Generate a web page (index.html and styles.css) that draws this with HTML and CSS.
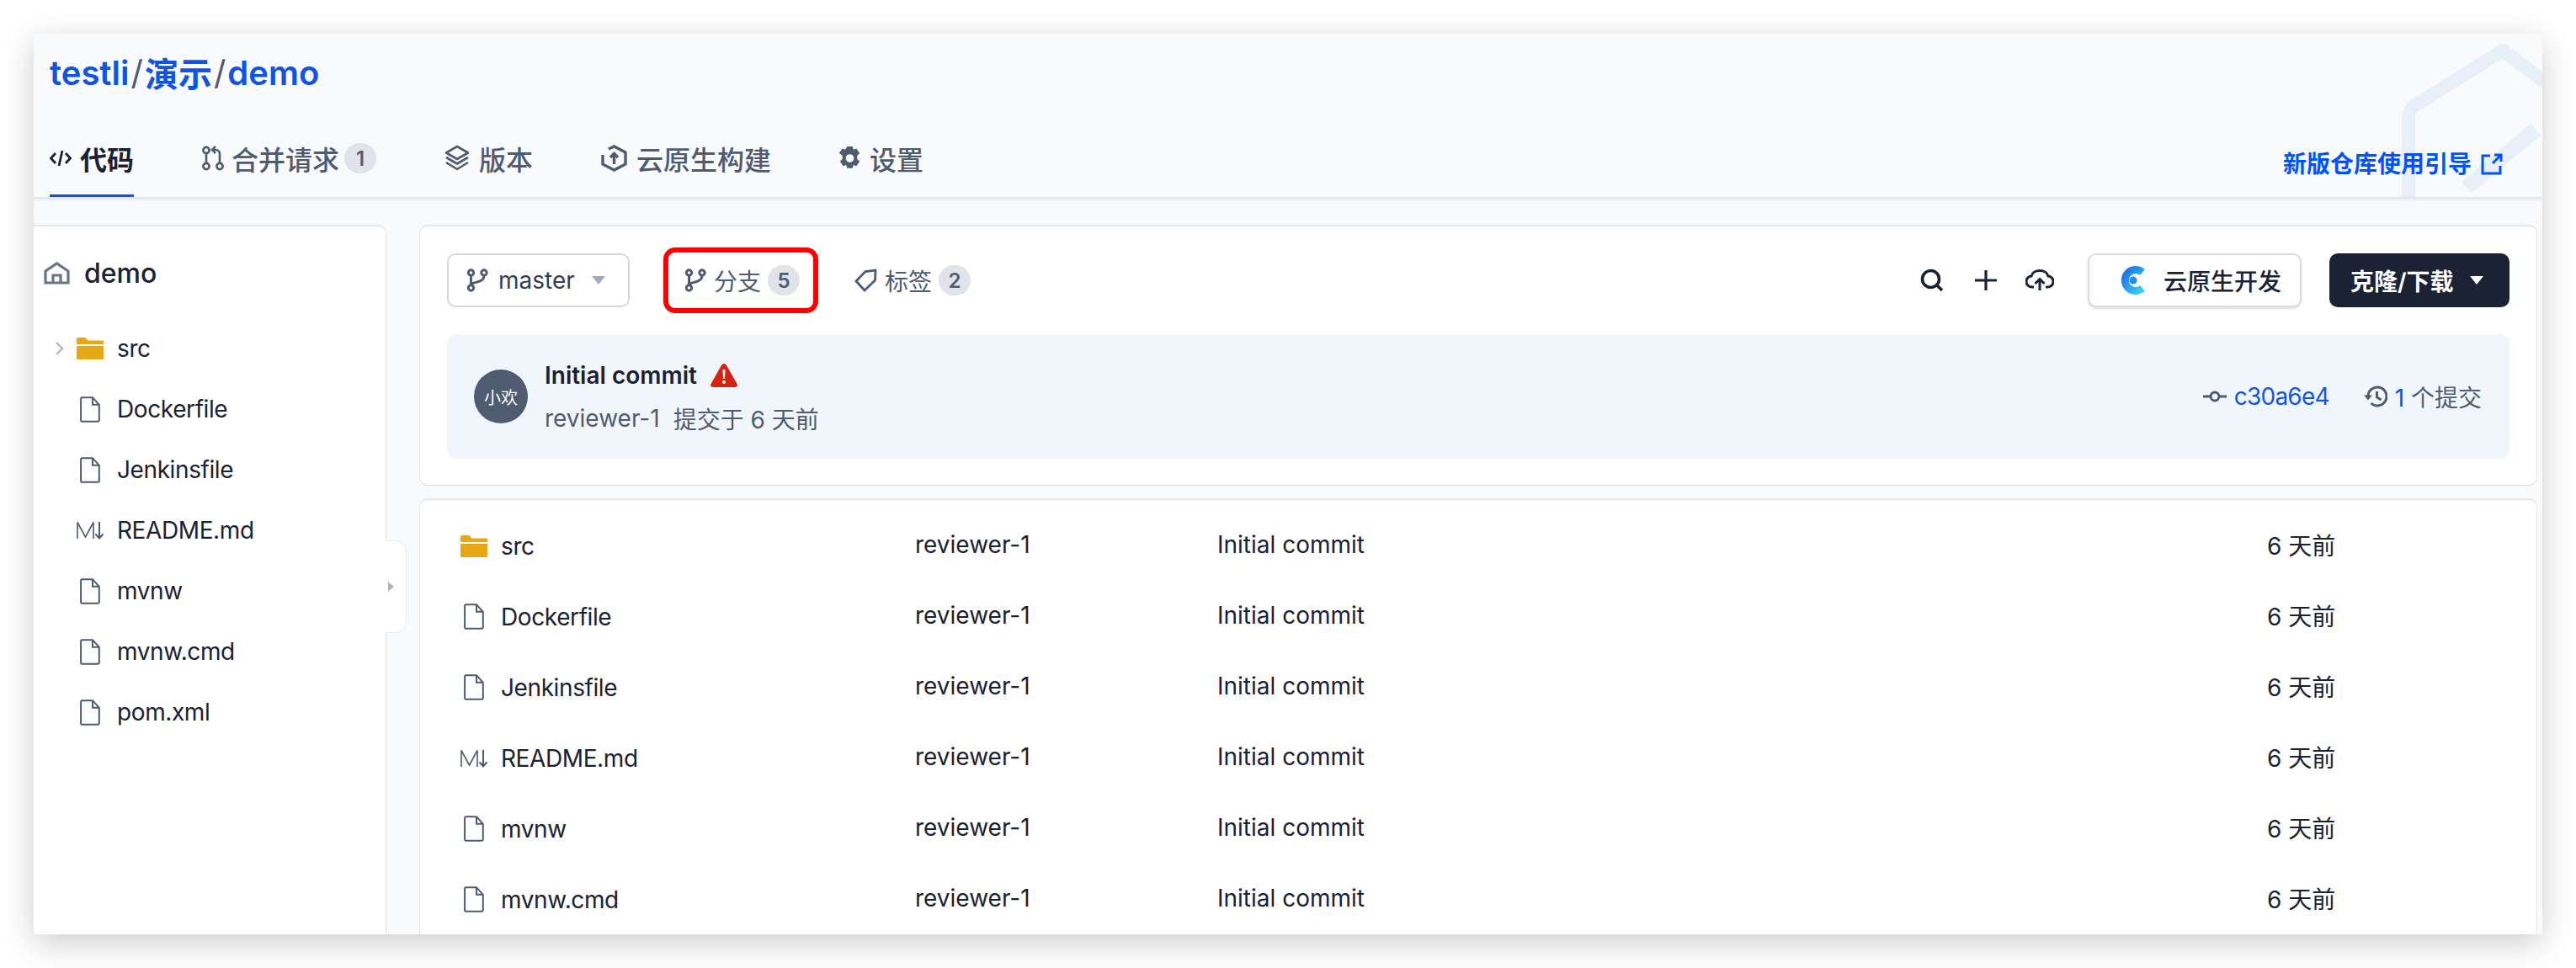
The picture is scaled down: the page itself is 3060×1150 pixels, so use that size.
FILE: index.html
```html
<!DOCTYPE html>
<html lang="zh-CN">
<head>
<meta charset="utf-8">
<title>demo</title>
<link rel="stylesheet" href="styles.css">
</head>
<body>
<svg class="defs" width="0" height="0" aria-hidden="true">
  <defs>
    <linearGradient id="cgrad" x1="0" y1="0" x2="1" y2="1">
      <stop offset="0" stop-color="#1f6fe8"/>
      <stop offset="1" stop-color="#35d3ee"/>
    </linearGradient>
    <symbol id="i-branch" viewBox="0 0 26 28">
      <g fill="none" stroke="currentColor" stroke-width="3">
        <circle cx="5.5" cy="5" r="3.2"/><circle cx="21" cy="5" r="3.2"/><circle cx="5.5" cy="23" r="3.2"/>
        <path d="M5.5 8.5V19.5M21 8.5c0 5-4 6.5-8 7.5-4 1-7.5 1.5-7.5 4"/>
      </g>
    </symbol>
    <symbol id="i-file" viewBox="0 0 24 31">
      <path d="M2.5 1.2h12.5l7.8 8.6v18.4a1.6 1.6 0 0 1-1.6 1.6H2.500a1.400 1.400 0 0 1-1.400-1.600V2.600a1.400 1.400 0 0 1 1.400-1.400zM15 1.200v8.600h7.800" fill="none" stroke="#4f5b70" stroke-width="2"/>
    </symbol>
    <symbol id="i-folder" viewBox="0 0 32 26">
      <path d="M0 2a2 2 0 0 1 2-2h8.500l3 3.500H32V8H0z" fill="#e6a915"/>
      <path d="M0 10h32v15a1 1 0 0 1-1 1H1a1 1 0 0 1-1-1z" fill="#e6a915"/>
    </symbol>
    <symbol id="i-md" viewBox="0 0 32 22">
      <path d="M1 21V1.500L10.500 19 20 1.500V21" fill="none" stroke="#4f5b70" stroke-width="1.600"/>
      <path d="M27 1v19M22.500 15.500l4.500 5 4.500-5" fill="none" stroke="#4f5b70" stroke-width="2"/>
    </symbol>
  </defs>
</svg>

<div class="panel">
  <header class="repo-head">
    <svg class="watermark" viewBox="0 0 168 183" aria-hidden="true">
      <path d="M9 183V90Q9 82 14 76L121 9 172 47" fill="none" stroke="#e8eff9" stroke-width="16" stroke-linejoin="round"/>
      <path d="M154 96L166 110 84 178 72 165z" fill="#e8eff9"/>
    </svg>
    <h1 class="crumbs"><a>testli</a><span class="sep">/</span><a>演示</a><span class="sep">/</span><a>demo</a></h1>
    <nav class="tabs">
      <a class="tab active">
        <svg class="ic" width="26" height="24" viewBox="0 0 26 24"><path d="M7 6L1.500 12 7 18M19 6l5.500 6L19 18M15 3l-4 18" fill="none" stroke="currentColor" stroke-width="2.800"/></svg>
        <span>代码</span>
      </a>
      <a class="tab mr">
        <svg class="ic" width="28" height="30" viewBox="0 0 28 30"><g fill="none" stroke="currentColor" stroke-width="2.600"><circle cx="6" cy="5.500" r="3.600"/><circle cx="6" cy="24.500" r="3.600"/><circle cx="22" cy="24.500" r="3.600"/><path d="M6 9v12M22 21V10c0-3-2-5-5-5h-3"/><path d="M17 1l-4 4 4 4"/></g></svg>
        <span>合并请求</span><b class="badge">1</b>
      </a>
      <a class="tab">
        <svg class="ic" width="32" height="32" viewBox="0 0 32 32"><g fill="none" stroke="currentColor" stroke-width="2.600" stroke-linejoin="round"><path d="M16 2L29 9.500 16 17 3 9.500z"/><path d="M3 15l13 7.500L29 15"/><path d="M3 21l13 8 13-8"/></g></svg>
        <span>版本</span>
      </a>
      <a class="tab">
        <svg class="ic" width="33" height="32" viewBox="0 0 33 32"><g fill="none" stroke="currentColor" stroke-width="3.400"><path d="M10 5L16.500 2 30 9v14l-13.500 7L3 23V12"/><path d="M16.500 23V11M12 15l4.500-4.500L21 15"/></g></svg>
        <span>云原生构建</span>
      </a>
      <a class="tab">
        <svg class="ic" width="27" height="28" viewBox="0 0 25 26"><path fill="currentColor" fill-rule="evenodd" d="M9.500 0h6l1 3.500 3.300-1.200 3.500 5.200-2.600 2.500v4l2.600 2.500-3.500 5.200-3.300-1.200-1 3.500h-6l-1-3.500-3.300 1.200-3.500-5.200 2.600-2.500v-4L.700 7.500l3.500-5.200 3.300 1.200zM12.500 8.500a4.500 4.500 0 1 0 0 9 4.500 4.500 0 0 0 0-9z"/></svg>
        <span>设置</span>
      </a>
      <a class="guide">新版仓库使用引导
        <svg width="26" height="26" viewBox="0 0 26 26"><path d="M11 3H2v21h21v-9M14 12L24 2M16 2h8v8" fill="none" stroke="currentColor" stroke-width="3"/></svg>
      </a>
    </nav>
  </header>

  <main class="body">
    <aside class="side">
      <div class="side-head">
        <svg width="31" height="27" viewBox="0 0 31 27"><path d="M2 25V11L15.500 2 29 11v14zM11 25v-9h9v9" fill="none" stroke="#68748a" stroke-width="3.200"/></svg>
        <span>demo</span>
      </div>
      <ul class="tree">
        <li class="node">
          <span class="caret"><svg width="11" height="18" viewBox="0 0 11 18"><path d="M2 2l7 7-7 7" fill="none" stroke="#aeb5c3" stroke-width="2.400"/></svg></span>
          <svg class="slot" width="32" height="26"><use href="#i-folder"/></svg><span>src</span>
        </li>
        <li class="node"><span class="caret"></span><svg class="slot file" width="32" height="31" viewBox="-4 0 32 31"><use href="#i-file" width="24" height="31"/></svg><span>Dockerfile</span></li>
        <li class="node"><span class="caret"></span><svg class="slot file" width="32" height="31" viewBox="-4 0 32 31"><use href="#i-file" width="24" height="31"/></svg><span>Jenkinsfile</span></li>
        <li class="node"><span class="caret"></span><svg class="slot" width="32" height="22"><use href="#i-md"/></svg><span>README.md</span></li>
        <li class="node"><span class="caret"></span><svg class="slot file" width="32" height="31" viewBox="-4 0 32 31"><use href="#i-file" width="24" height="31"/></svg><span>mvnw</span></li>
        <li class="node"><span class="caret"></span><svg class="slot file" width="32" height="31" viewBox="-4 0 32 31"><use href="#i-file" width="24" height="31"/></svg><span>mvnw.cmd</span></li>
        <li class="node"><span class="caret"></span><svg class="slot file" width="32" height="31" viewBox="-4 0 32 31"><use href="#i-file" width="24" height="31"/></svg><span>pom.xml</span></li>
      </ul>
      <div class="handle"><i class="handle-arrow"></i></div>
    </aside>

    <section class="content">
      <div class="card summary">
        <div class="toolbar">
          <button class="select">
            <svg width="26" height="28" class="gray"><use href="#i-branch"/></svg>
            <span>master</span><i class="arrow"></i>
          </button>
          <a class="pill hl">
            <svg width="26" height="28" class="gray"><use href="#i-branch"/></svg>
            <span>分支</span><b class="badge">5</b>
          </a>
          <a class="pill">
            <svg width="27" height="28" viewBox="0 0 27 28"><path d="M2 15L13 3.500 25 2l-.5 12L12 26zM18.500 8.500h.1" fill="none" stroke="#4f5b70" stroke-width="2.800"/></svg>
            <span>标签</span><b class="badge">2</b>
          </a>
          <div class="actions">
            <svg class="a-search" width="28" height="28" viewBox="0 0 28 28"><path d="M12.500 2.500a10 10 0 1 0 0 20 10 10 0 0 0 0-20zM19.500 19.500l6.500 6.500" fill="none" stroke="#1a2233" stroke-width="3.600"/></svg>
            <svg class="a-plus" width="26" height="24" viewBox="0 0 26 24"><path d="M13 0v24M0 12h26" stroke="#1a2233" stroke-width="3.200"/></svg>
            <svg class="a-cloud" width="34" height="26" viewBox="0 0 34 26"><path d="M10 21H8a6.500 6.500 0 0 1-1-13C8 4 12 1.500 17 1.500S26 4 27 8a6.500 6.500 0 0 1-1 13h-2M17 25V12M11.500 17l5.500-5.500 5.500 5.500" fill="none" stroke="#1a2233" stroke-width="3"/></svg>
          </div>
          <button class="cloud-btn">
            <svg width="33" height="34" viewBox="0 0 33 34"><path d="M29 7.500A12.500 12.500 0 1 0 29 26.500" fill="none" stroke="url(#cgrad)" stroke-width="9"/><circle cx="18" cy="17" r="4.500" fill="#1f8fe8"/></svg>
            <span>云原生开发</span>
          </button>
          <button class="clone"><span>克隆/下载</span><i class="arrow white"></i></button>
        </div>
        <div class="commit">
          <div class="avatar">小欢</div>
          <div class="commit-main">
            <div class="commit-title"><span>Initial commit</span>
              <svg width="32" height="28" viewBox="0 0 32 28"><path d="M16 0c1.500 0 2.500 1 3 2l12.500 22c1 2 0 4-2.500 4H3c-2.500 0-3.500-2-2.500-4L13 2c.500-1 1.500-2 3-2z" fill="#d4230f"/><path d="M14.500 7h3l-.5 11h-2z" fill="#fff"/><circle cx="16" cy="22" r="2" fill="#fff"/></svg>
            </div>
            <div class="commit-meta"><span>reviewer-1</span><span>提交于 6 天前</span></div>
          </div>
          <div class="commit-side">
            <span class="hash">
              <svg width="28" height="14" viewBox="0 0 28 14"><path d="M0 7h8M20 7h8" stroke="#4f5b70" stroke-width="3"/><circle cx="14" cy="7" r="5" fill="none" stroke="#4f5b70" stroke-width="3"/></svg>
              <a>c30a6e4</a>
            </span>
            <span class="count">
              <svg width="28" height="26" viewBox="0 0 28 26"><path d="M5 13a11 11 0 1 1 3.500 8M15.500 7v7l5 3" fill="none" stroke="#4f5b70" stroke-width="3"/><path d="M0 11.500h10L5 17.500z" fill="#4f5b70"/></svg>
              <span><em>1</em> 个提交</span>
            </span>
          </div>
        </div>
      </div>

      <div class="card files">
        <div class="row"><div class="name"><svg class="slot" width="32" height="26"><use href="#i-folder"/></svg><span>src</span></div><div>reviewer-1</div><div>Initial commit</div><div>6 天前</div></div>
        <div class="row"><div class="name"><svg class="slot" width="32" height="31" viewBox="-4 0 32 31"><use href="#i-file" width="24" height="31"/></svg><span>Dockerfile</span></div><div>reviewer-1</div><div>Initial commit</div><div>6 天前</div></div>
        <div class="row"><div class="name"><svg class="slot" width="32" height="31" viewBox="-4 0 32 31"><use href="#i-file" width="24" height="31"/></svg><span>Jenkinsfile</span></div><div>reviewer-1</div><div>Initial commit</div><div>6 天前</div></div>
        <div class="row"><div class="name"><svg class="slot" width="32" height="22"><use href="#i-md"/></svg><span>README.md</span></div><div>reviewer-1</div><div>Initial commit</div><div>6 天前</div></div>
        <div class="row"><div class="name"><svg class="slot" width="32" height="31" viewBox="-4 0 32 31"><use href="#i-file" width="24" height="31"/></svg><span>mvnw</span></div><div>reviewer-1</div><div>Initial commit</div><div>6 天前</div></div>
        <div class="row"><div class="name"><svg class="slot" width="32" height="31" viewBox="-4 0 32 31"><use href="#i-file" width="24" height="31"/></svg><span>mvnw.cmd</span></div><div>reviewer-1</div><div>Initial commit</div><div>6 天前</div></div>
      </div>
    </section>
  </main>
</div>
</body>
</html>
```

FILE: styles.css
```css
* { box-sizing: border-box; }
html, body { margin: 0; height: 100%; }
body {
  background: #fff;
  padding: 40px;
  overflow: hidden;
  font-family: Inter, "Noto Sans CJK SC", sans-serif;
  font-size: 28px;
  color: #1a2233;
}
.defs { position: absolute; }
svg { display: block; flex: none; }
ul { list-style: none; margin: 0; padding: 0; }
button { font: inherit; margin: 0; }
em { font-style: normal; color: #1154e3; }

.panel {
  width: 2980px;
  height: 1070px;
  background: #f9fafc;
  box-shadow: 0 10px 36px rgba(0, 0, 0, .2);
  display: flex;
  flex-direction: column;
  overflow: hidden;
}

.repo-head {
  position: relative;
  height: 195px;
  flex: none;
  padding-left: 19px;
  border-bottom: 1px solid #dfe3ea;
  box-shadow: 0 2px 3px rgba(60, 70, 90, .12);
  z-index: 1;
  overflow: hidden;
}
.watermark {
  position: absolute;
  right: 0;
  bottom: 0;
  width: 168px;
  height: 183px;
}
.crumbs {
  position: relative;
  margin: 0;
  height: 92px;
  display: flex;
  align-items: center;
  font-size: 40px;
  font-weight: 600;
  color: #1154e3;
}
.sep { color: #4f5b70; font-weight: 400; padding: 0 2px; }

.tabs {
  position: relative;
  display: flex;
  gap: 80px;
  height: 103px;
  padding-right: 47px;
}
.tab {
  height: 103px;
  padding-top: 13px;
  border-bottom: 4px solid transparent;
  display: flex;
  align-items: center;
  gap: 10px;
  font-size: 32px;
  font-weight: 500;
  color: #4f5b70;
}
.tab.mr { gap: 8px; }
.tab.mr .badge { margin-left: -2px; }
.tab.active {
  color: #1a2233;
  font-weight: 600;
  border-bottom-color: #1154e3;
}
.badge {
  width: 38px;
  height: 36px;
  border-radius: 18px;
  background: #e0e4ea;
  color: #4f5b70;
  font-size: 24px;
  font-weight: 600;
  display: flex;
  align-items: center;
  justify-content: center;
}
.guide {
  margin-left: auto;
  padding-top: 49px;
  height: 77px;
  display: flex;
  gap: 11px;
  align-items: center;
  color: #0052ff;
  font-weight: 600;
  line-height: 28px;
}

.body {
  flex: 1;
  min-height: 0;
  display: flex;
  padding: 32px 6px 0 0;
  gap: 39px;
}

.side {
  position: relative;
  width: 419px;
  flex: none;
  background: #fff;
  border-right: 1px solid #e4e7ec;
  border-top: 2px solid #e4e7ec;
  border-top-right-radius: 10px;
  letter-spacing: -.4px;
}
.side-head {
  display: flex;
  align-items: center;
  gap: 17px;
  height: 109px;
  padding: 2px 12px 0;
  font-size: 32px;
  font-weight: 500;
  letter-spacing: 0;
}
.node {
  height: 72px;
  display: flex;
  align-items: center;
  padding-left: 25px;
}
.caret { width: 26px; flex: none; }
.slot { margin-right: 16px; }

.handle {
  position: absolute;
  left: 418px;
  top: 373px;
  width: 25px;
  height: 110px;
  background: #fff;
  border: 1px solid #e9ecf1;
  border-left: none;
  border-radius: 0 14px 14px 0;
  display: flex;
  align-items: center;
  padding-left: 3px;
}
.handle-arrow {
  border-left: 7px solid #aeb5c3;
  border-top: 6px solid transparent;
  border-bottom: 6px solid transparent;
}

.content {
  flex: 1;
  min-width: 0;
  display: flex;
  flex-direction: column;
  gap: 15px;
}
.card {
  background: #fff;
  border: 1px solid #e4e7ec;
  border-top-width: 2px;
  border-radius: 10px;
}
.summary {
  height: 310px;
  flex: none;
  padding: 32px;
  border-bottom-color: #d5d9e0;
  display: flex;
  flex-direction: column;
  gap: 32px;
}
.toolbar {
  height: 64px;
  flex: none;
  display: flex;
  align-items: center;
}
.select {
  width: 217px;
  height: 64px;
  border: 2px solid #d3d8e0;
  border-radius: 10px;
  background: #fff;
  display: flex;
  align-items: center;
  padding: 0 0 0 21px;
  gap: 12px;
  color: #343f52;
}
.select .arrow { margin-left: 8px; }
.gray { color: #4f5b70; }
.arrow {
  width: 0;
  height: 0;
  border-left: 8px solid transparent;
  border-right: 8px solid transparent;
  border-top: 10px solid #a3abb9;
}
.arrow.white { border-top-color: #fff; }
.pill {
  display: flex;
  align-items: center;
  gap: 9px;
  color: #4f5b70;
}
.pill .badge { margin-left: -1px; }
.hl {
  margin: -7px 0 -7px 40px;
  width: 184px;
  height: 78px;
  border: 6px solid #f00;
  border-radius: 14px;
  padding-left: 19px;
}
.hl + .pill { margin-left: 43px; }
.actions {
  margin-left: auto;
  display: flex;
  align-items: center;
}
.a-plus { margin: 0 34px 0 37px; }
.cloud-btn {
  margin-left: 40px;
  width: 254px;
  height: 64px;
  background: #fff;
  border: 2px solid #d8dce3;
  border-radius: 10px;
  box-shadow: 0 2px 3px rgba(60, 70, 90, .18);
  display: flex;
  align-items: center;
  gap: 21px;
  padding: 0 0 0 34px;
  color: #1a2233;
  font-weight: 500;
}
.clone {
  margin-left: 33px;
  width: 214px;
  height: 64px;
  background: #1a2233;
  border: none;
  border-radius: 10px;
  color: #fff;
  font-weight: 600;
  display: flex;
  align-items: center;
  gap: 19px;
  padding: 0 0 0 25px;
}

.commit {
  height: 148px;
  flex: none;
  background: #f1f6fd;
  border-radius: 12px;
  display: flex;
  align-items: center;
  padding: 0 33px 0 32px;
}
.avatar {
  width: 64px;
  height: 64px;
  border-radius: 50%;
  background: #4f5b70;
  color: #fff;
  font-size: 20px;
  display: flex;
  align-items: center;
  justify-content: center;
  flex: none;
  margin-right: 20px;
}
.commit-main {
  display: flex;
  flex-direction: column;
  gap: 15px;
}
.commit-title {
  display: flex;
  align-items: center;
  gap: 16px;
  font-weight: 600;
  height: 36px;
}
.commit-meta {
  display: flex;
  gap: 16px;
  height: 36px;
  align-items: center;
  color: #4f5b70;
}
.commit-side {
  margin-left: auto;
  display: flex;
  align-items: center;
  gap: 41px;
  color: #4f5b70;
}
.hash, .count { display: flex; align-items: center; gap: 9px; }
.hash a { color: #1154e3; letter-spacing: -.8px; }

.files {
  flex: 1;
  border-radius: 10px 10px 0 0;
  border-bottom: none;
  padding: 11px 0 0 48px;
  overflow: hidden;
}
.row {
  height: 84px;
  display: grid;
  grid-template-columns: 540px 359px 1247px auto;
  align-items: center;
}
.name {
  display: flex;
  align-items: center;
  padding-top: 3px;
  letter-spacing: -.4px;
}
```
